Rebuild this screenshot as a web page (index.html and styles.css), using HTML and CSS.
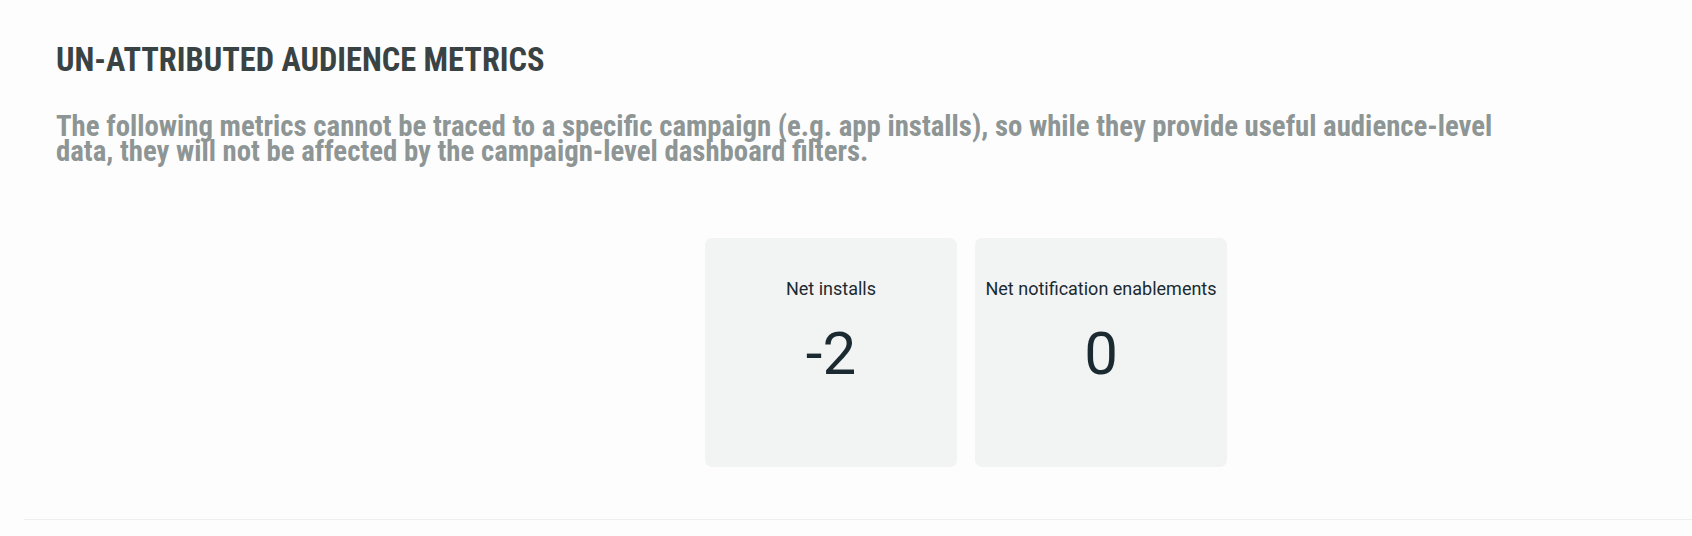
FILE: index.html
```html
<!DOCTYPE html>
<html lang="en">
<head>
<meta charset="utf-8">
<title>Un-attributed audience metrics</title>
<link rel="stylesheet" href="styles.css">
</head>
<body>
<section class="section">
  <div class="intro">
    <h2 class="title">UN-ATTRIBUTED AUDIENCE METRICS</h2>
    <p class="desc">The following metrics cannot be traced to a specific campaign (e.g. app installs), so while they provide useful audience-level data, they will not be affected by the campaign-level dashboard filters.</p>
  </div>
  <div class="cards">
    <div class="card">
      <div class="card-label">Net installs</div>
      <div class="card-value">-2</div>
    </div>
    <div class="card">
      <div class="card-label">Net notification enablements</div>
      <div class="card-value">0</div>
    </div>
  </div>
  <div class="divider"></div>
</section>
</body>
</html>
```
FILE: styles.css
```css
html, body {
  margin: 0;
  padding: 0;
  background: #fdfdfd;
}
body {
  font-family: Roboto, "Noto Sans", sans-serif;
  width: 1692px;
  height: 536px;
  overflow: hidden;
}
.section {
  display: flex;
  flex-direction: column;
}
.intro {
  padding: 40px 0 0 56px;
}
.title {
  margin: 0;
  font-family: Roboto, sans-serif;
  font-stretch: 75%;
  font-weight: 700;
  font-size: 32.4px;
  line-height: 40px;
  color: #3a4343;
}
.desc {
  margin: 34px 0 0 0;
  max-width: 1460px;
  font-family: Roboto, sans-serif;
  font-stretch: 75%;
  font-weight: 700;
  font-size: 28.8px;
  line-height: 25px;
  color: #8e9595;
}
.cards {
  display: flex;
  justify-content: center;
  gap: 18px;
  padding-left: 240px;
  margin-top: 74px;
}
.card {
  width: 252px;
  height: 229px;
  box-sizing: border-box;
  padding-top: 41px;
  background: #f2f4f4;
  border-radius: 7px;
  text-align: center;
  color: #1b2a31;
}
.card-label {
  font-size: 18px;
  line-height: 20px;
}
.card-value {
  margin-top: 20px;
  font-size: 60px;
  line-height: 70px;
}
.divider {
  margin: 52px 0 0 24px;
  height: 1px;
  background: #eeeeee;
}
```
